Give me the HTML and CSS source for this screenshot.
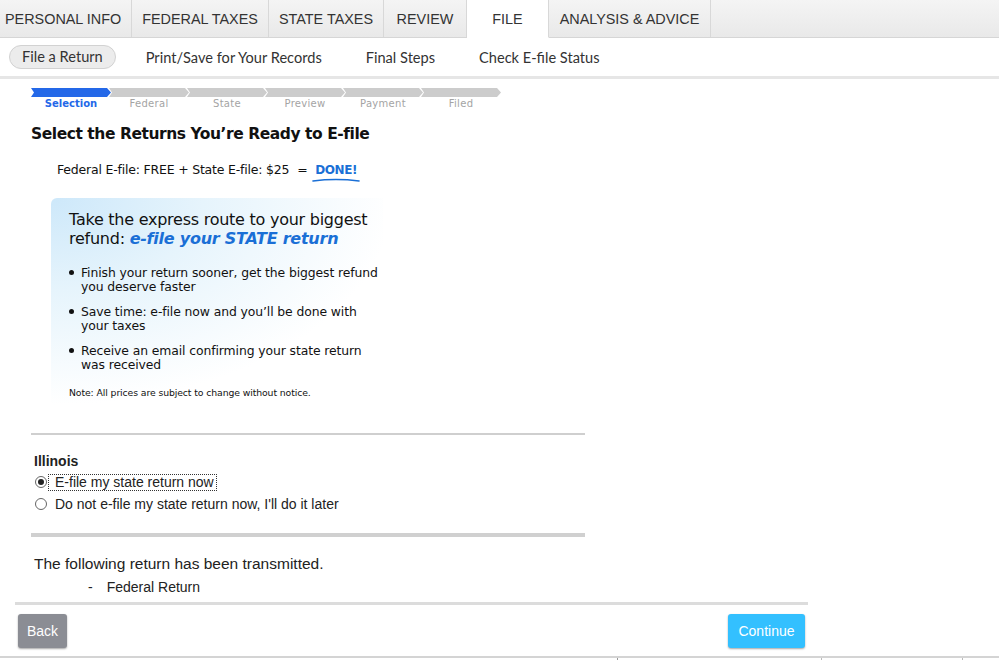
FILE: index.html
```html
<!DOCTYPE html>
<html>
<head>
<meta charset="utf-8">
<link rel="stylesheet" href="styles.css">
</head>
<body>
<div class="tabs">
  <div class="tab">PERSONAL INFO</div>
  <div class="tab">FEDERAL TAXES</div>
  <div class="tab">STATE TAXES</div>
  <div class="tab">REVIEW</div>
  <div class="tab active">FILE</div>
  <div class="tab">ANALYSIS &amp; ADVICE</div>
</div>
<div class="subnav">
  <div class="sub pill">File a Return</div>
  <div class="sub">Print/Save for Your Records</div>
  <div class="sub">Final Steps</div>
  <div class="sub">Check E-file Status</div>
</div>
<div class="content">
  <div class="steps">
    <div class="step current"><svg class="arrow" viewBox="0 0 80 9" preserveAspectRatio="none"><polygon points="0,0 76,0 80,4.5 76,9 0,9 3,4.5"/></svg><span>Selection</span></div>
    <div class="step"><svg class="arrow" viewBox="0 0 80 9" preserveAspectRatio="none"><polygon points="0,0 76,0 80,4.5 76,9 0,9 3,4.5"/></svg><span>Federal</span></div>
    <div class="step"><svg class="arrow" viewBox="0 0 80 9" preserveAspectRatio="none"><polygon points="0,0 76,0 80,4.5 76,9 0,9 3,4.5"/></svg><span>State</span></div>
    <div class="step"><svg class="arrow" viewBox="0 0 80 9" preserveAspectRatio="none"><polygon points="0,0 76,0 80,4.5 76,9 0,9 3,4.5"/></svg><span>Preview</span></div>
    <div class="step"><svg class="arrow" viewBox="0 0 80 9" preserveAspectRatio="none"><polygon points="0,0 76,0 80,4.5 76,9 0,9 3,4.5"/></svg><span>Payment</span></div>
    <div class="step"><svg class="arrow" viewBox="0 0 80 9" preserveAspectRatio="none"><polygon points="0,0 76,0 80,4.5 76,9 0,9 3,4.5"/></svg><span>Filed</span></div>
  </div>
  <h1 class="title">Select the Returns You’re Ready to E-file</h1>
  <div class="price">Federal E-file: FREE + State E-file: $25 <span class="eq">=</span> <span class="done">DONE!<svg class="swoosh" viewBox="0 0 50 6"><path d="M1 4 Q 25 1 49 4" fill="none" stroke="#1a6fd6" stroke-width="1.6" stroke-linecap="round"/></svg></span></div>
  <div class="promo">
    <div class="promo-title">Take the express route to your biggest refund: <em>e-file your STATE return</em></div>
    <ul class="bullets">
      <li>Finish your return sooner, get the biggest refund you deserve faster</li>
      <li>Save time: e-file now and you’ll be done with your taxes</li>
      <li>Receive an email confirming your state return was received</li>
    </ul>
    <div class="note">Note: All prices are subject to change without notice.</div>
  </div>
  <hr class="rule thin">
  <div class="state">
    <div class="state-name">Illinois</div>
    <label class="radio"><span class="dot checked"></span><span class="focus">E-file my state return now</span></label>
    <label class="radio"><span class="dot"></span><span class="plain">Do not e-file my state return now, I'll do it later</span></label>
  </div>
  <hr class="rule thick">
  <div class="transmitted">The following return has been transmitted.</div>
  <div class="returned"><span class="dash">-</span>Federal Return</div>
</div>
<div class="footer">
  <button class="btn back">Back</button>
  <button class="btn cont">Continue</button>
</div>
<div class="bottom">
  <div class="seg s1"></div><div class="seg s2"></div><div class="seg s3"></div><div class="seg s4"></div>
</div>
</body>
</html>
```
FILE: styles.css
```css
html, body { margin: 0; padding: 0; background: #fff; }
body { width: 999px; height: 660px; overflow: hidden; font-family: "Liberation Sans", Arial, sans-serif; color: #333; }

.tabs {
  display: flex;
  height: 38px;
  background: linear-gradient(#f4f4f4, #e9e9e9);
  border-bottom: 1px solid #d6d6d6;
  box-sizing: border-box;
}
.tab {
  display: flex; align-items: center; justify-content: center;
  font-size: 14.4px; color: #333;
  border-right: 1px solid #d8d8d8;
  box-sizing: border-box;
}
.tab:nth-child(1) { width: 132px; justify-content: flex-start; padding-left: 5px; }
.tab:nth-child(2) { width: 137px; }
.tab:nth-child(3) { width: 115px; }
.tab:nth-child(4) { width: 83px; }
.tab:nth-child(5) { width: 82px; }
.tab:nth-child(6) { width: 162px; }
.tab.active { background: #fff; height: 38px; border-bottom: 1px solid #fff; }

.subnav {
  display: flex; align-items: center;
  height: 38px;
  border-bottom: 3px solid #e6e6e6;
  font-family: Lato, "Open Sans", sans-serif;
  font-size: 14.6px; color: #333;
  padding-left: 9px;
}
.sub { margin-right: 44px; }
.pill {
  height: 22px; line-height: 22px;
  padding: 0 12px;
  background: #ececec;
  border: 1px solid #d2d2d2;
  border-radius: 13px;
  margin-right: 30px;
}

.content { padding-left: 31px; width: 554px; }

.steps { display: flex; margin-top: 9px; padding-left: 1px; }
.step { width: 78px; display: flex; flex-direction: column; align-items: center; }
.arrow { width: 80px; height: 9px; display: block; margin-left: 0; }
.arrow polygon { fill: #cccccc; }
.step span { font-family: "DejaVu Sans", Verdana, sans-serif; font-size: 10px; color: #a4a4a4; margin-top: 1px; letter-spacing: 0.3px; }
.step.current .arrow polygon { fill: #2468e8; }
.step.current span { color: #2468e8; font-weight: bold; letter-spacing: 0; }

.title {
  font-family: "DejaVu Sans", Verdana, sans-serif;
  font-weight: bold; font-size: 15.5px; color: #111;
  margin: 16px 0 0 0; letter-spacing: -0.45px;
}
.price {
  font-family: "DejaVu Sans", Verdana, sans-serif; font-size: 12.5px; color: #111;
  margin: 19px 0 0 26px; letter-spacing: -0.2px;
}
.eq { margin-left: 4px; }
.done { color: #1a6fd6; font-weight: bold; margin-left: 4px; position: relative; font-size: 12px; letter-spacing: -0.4px; }
.swoosh { position: absolute; left: -3px; bottom: -6px; width: 48px; height: 6px; }

.promo {
  margin: 21px 0 0 20px;
  width: 332px;
  padding: 12px 2px 12px 18px;
  box-sizing: border-box;
  border-radius: 6px 0 0 0;
  background: radial-gradient(ellipse 380px 230px at 0 0, #cde8fa 0%, #e6f4fc 40%, rgba(255,255,255,0) 90%);
  font-family: "DejaVu Sans", Verdana, sans-serif;
  color: #111;
}
.promo-title { font-size: 16px; line-height: 19px; letter-spacing: -0.25px; }
.promo-title em { color: #1a6fd6; font-weight: bold; font-style: italic; }
.bullets { margin: 18px 0 0 0; padding: 0 0 0 12px; list-style: none; font-size: 12.4px; line-height: 14px; letter-spacing: -0.1px; }
.bullets li { position: relative; margin-bottom: 11px; }
.bullets li::before { content: ""; position: absolute; left: -12px; top: 4px; width: 5px; height: 5px; border-radius: 50%; background: #111; }
.note { font-size: 9.3px; margin-top: 15px; letter-spacing: -0.1px; }

.rule { border: 0; margin: 0; background: #cfcfcf; }
.rule.thin { height: 2px; margin-top: 23px; }
.rule.thick { height: 4px; margin-top: 18px; background: #d0d0d0; }

.state { padding-left: 3px; margin-top: 18px; }
.state-name { font-weight: bold; font-size: 14px; color: #222; margin-bottom: 2px; }
.radio { display: flex; align-items: center; font-size: 14px; color: #222; height: 22px; }
.dot { width: 12px; height: 12px; border: 1px solid #666; border-radius: 50%; margin-right: 2px; box-sizing: border-box; position: relative; margin-left: 1px; }
.dot.checked::after { content: ""; position: absolute; left: 2px; top: 2px; width: 6px; height: 6px; border-radius: 50%; background: #222; }
.focus { outline: 1px dotted #333; padding: 0 2px 0 6px; line-height: 15px; }
.plain { padding-left: 6px; }

.transmitted { font-size: 15.5px; color: #222; margin: 18px 0 0 3px; }
.returned { font-size: 14px; color: #222; margin: 6px 0 0 57px; }
.dash { margin-right: 14px; }

.footer {
  width: 793px; margin-left: 15px; margin-top: 7px;
  border-top: 3px solid #dcdcdc;
  display: flex; justify-content: space-between;
  padding: 9px 3px 0 3px; box-sizing: border-box;
}
.btn {
  border: 0; border-radius: 3px;
  height: 34px; color: #fff;
  font-family: "Liberation Sans", Arial, sans-serif; font-size: 14px;
  box-shadow: 0 1px 2px rgba(0,0,0,0.35);
}
.back { background: #8b8d94; width: 49px; padding: 0; }
.cont { background: #33c0ff; width: 77px; padding: 0; }

.bottom {
  display: flex; margin-top: 8px;
  border-top: 2px solid #d4d4d4;
  height: 5px;
}
.seg { height: 5px; }
.s1 { width: 617px; border-right: 1px solid #999; }
.s2 { width: 203px; border-right: 1px solid #bbb; }
.s3 { width: 140px; border-right: 1px solid #bbb; }
```
